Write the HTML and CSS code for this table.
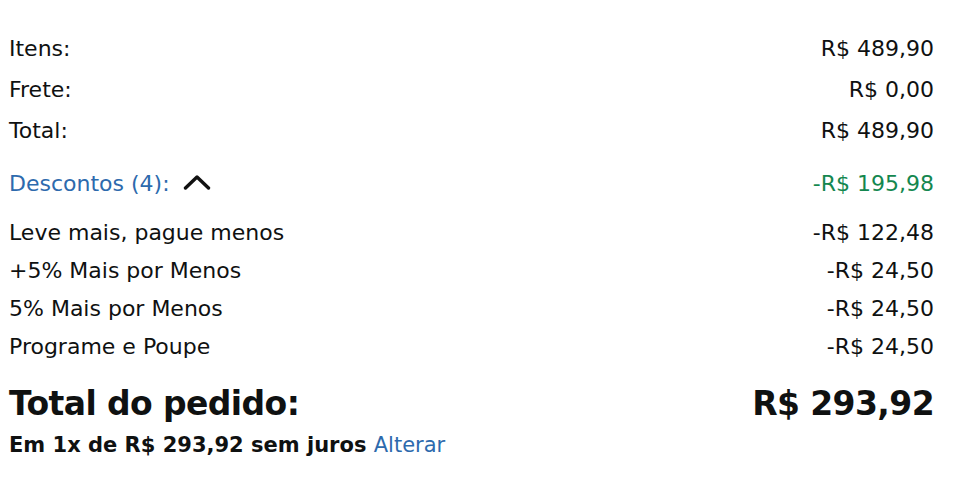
FILE: index.html
```html
<!DOCTYPE html>
<html lang="pt-BR">
<head>
<meta charset="utf-8">
<title>Resumo do pedido</title>
<link rel="stylesheet" href="styles.css">
</head>
<body>
<div class="summary">
  <div class="group">
    <div class="row"><span>Itens:</span><span>R$ 489,90</span></div>
    <div class="row"><span>Frete:</span><span>R$ 0,00</span></div>
    <div class="row"><span>Total:</span><span>R$ 489,90</span></div>
  </div>
  <div class="row discounts">
    <span class="link">Descontos (4): <svg class="chev" width="28" height="16" viewBox="0 0 28 16"><path d="M2.5 14 L14 3 L25.5 14" fill="none" stroke="#111" stroke-width="3.4" stroke-linecap="round" stroke-linejoin="round"/></svg></span>
    <span class="green">-R$ 195,98</span>
  </div>
  <div class="group list">
    <div class="row tight"><span>Leve mais, pague menos</span><span>-R$ 122,48</span></div>
    <div class="row tight"><span>+5% Mais por Menos</span><span>-R$ 24,50</span></div>
    <div class="row tight"><span>5% Mais por Menos</span><span>-R$ 24,50</span></div>
    <div class="row tight"><span>Programe e Poupe</span><span>-R$ 24,50</span></div>
  </div>
  <div class="row grand"><span>Total do pedido:</span><span>R$ 293,92</span></div>
  <div class="install">Em 1x de R$ 293,92 sem juros <span class="link plain">Alterar</span></div>
</div>
</body>
</html>
```

FILE: styles.css
```css
html, body {
  margin: 0;
  padding: 0;
  background: #fff;
}
body {
  font-family: "DejaVu Sans", "Noto Sans", sans-serif;
  color: #0f1111;
}
.summary {
  padding: 28px 45px 0 9px;
}
.row {
  display: flex;
  justify-content: space-between;
  align-items: center;
  font-size: 22px;
  line-height: 41px;
}
.discounts {
  margin-top: 12px;
}
.link {
  color: #2d6aad;
  display: inline-flex;
  align-items: center;
}
.link.plain {
  display: inline;
}
.chev {
  margin-left: 13px;
  margin-top: -4px;
}
.green {
  color: #14874f;
}
.list {
  margin-top: 10px;
}
.row.tight {
  line-height: 38px;
}
.grand {
  margin-top: 16px;
  font-size: 33px;
  font-weight: 700;
  letter-spacing: -0.6px;
  line-height: 44px;
}
.install {
  margin-top: 4px;
  font-size: 21px;
  font-weight: 700;
  line-height: 30px;
}
.install .link {
  font-weight: 400;
}
```
